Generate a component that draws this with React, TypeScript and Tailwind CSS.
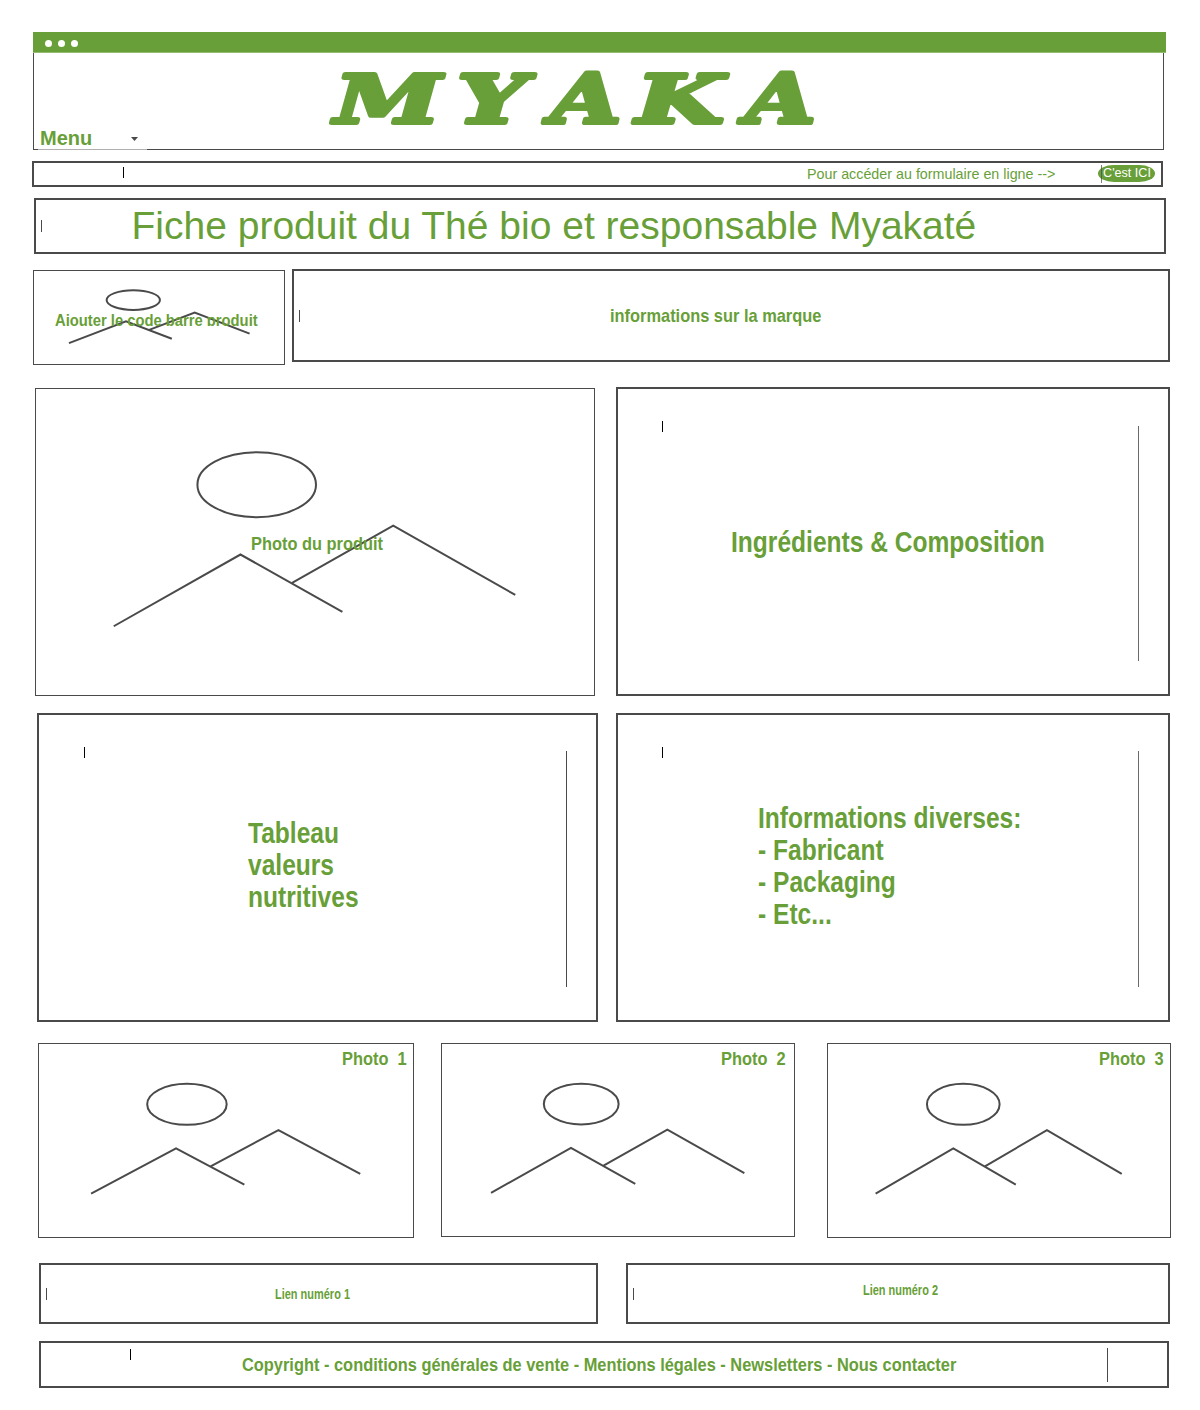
import type { ReactNode } from 'react';

const cx = (...parts: (string | undefined)[]) => parts.filter(Boolean).join(' ');

function Caret({ className }: { className: string }) {
  return <span className={cx('block w-px shrink-0', className)} />;
}

function Label({ className, children }: { className: string; children: ReactNode }) {
  return (
    <span className={cx('block shrink-0 origin-left scale-x-[.863] whitespace-pre text-[19px] font-bold leading-[20px]', className)}>
      {children}
    </span>
  );
}

function Heading({ className, children }: { className: string; children: ReactNode }) {
  return (
    <h2 className={cx('shrink-0 origin-left scale-x-[.847] whitespace-pre text-[29px] font-bold leading-[32px]', className)}>
      {children}
    </h2>
  );
}

function Frame({ className, children }: { className: string; children: ReactNode }) {
  return <section className={cx('flex shrink-0 items-start border-2 border-[#4a4a4a]', className)}>{children}</section>;
}

/* Image placeholder: a sun above two mountains, stretched to its box. */
function Picture({ className, children }: { className: string; children: ReactNode }) {
  return (
    <figure className={cx('grid shrink-0 grid-rows-[100%] border border-[#4a4a4a]', className)}>
      <svg
        className="col-start-1 row-start-1 h-full min-h-0 w-full overflow-visible"
        viewBox="0 0 560 308"
        preserveAspectRatio="none"
        fill="none"
        stroke="#4a4a4a"
        strokeWidth="2"
      >
        <ellipse cx="221.5" cy="96.3" rx="59.5" ry="32.7" vectorEffect="non-scaling-stroke" />
        <path d="M78 238.8 205.2 166.6 307.5 224.4" vectorEffect="non-scaling-stroke" />
        <path d="M257 195.2 358.5 137.5 481 207.3" vectorEffect="non-scaling-stroke" />
      </svg>
      {children}
    </figure>
  );
}

const LETTERS = [
  { char: 'M', transform: 'translate(5.5 55) scale(1.44 1)' },
  { char: 'Y', transform: 'translate(128 55) scale(1.46 1)' },
  { char: 'A', transform: 'translate(221.5 55) scale(1.36 1.04)' },
  { char: 'K', transform: 'translate(307 55) scale(1.51 1)' },
  { char: 'A', transform: 'translate(416.5 55) scale(1.35 1.04)' },
];

function Logo() {
  return (
    <svg className="ml-[295px] mt-[15px] h-[58px] w-[500px] shrink-0 overflow-visible" viewBox="0 0 500 58" aria-label="MYAKA">
      <g
        fill="#689f38"
        stroke="#689f38"
        strokeWidth="4"
        strokeLinejoin="round"
        fontFamily="'DejaVu Serif', serif"
        fontWeight="700"
        fontStyle="italic"
        fontSize="67"
      >
        {LETTERS.map((l, i) => (
          <text key={i} transform={l.transform}>
            {l.char}
          </text>
        ))}
      </g>
    </svg>
  );
}

export default function App() {
  return (
    <main className="flex h-[1410px] w-[1200px] flex-col bg-white pt-8 font-['Liberation_Sans',Arial,sans-serif] text-[#689f38]">
      <header className="ml-[33px] h-[118px] w-[1133px]">
        <div className="flex h-[21px] items-center gap-[6px] border-b border-[#93bb71] bg-[#689f38] pl-3 pt-[3px]">
          <i className="size-[7px] rounded-full bg-white" />
          <i className="size-[7px] rounded-full bg-white" />
          <i className="size-[7px] rounded-full bg-white" />
        </div>
        <div className="flex h-[97px] w-[1131px] flex-col border border-t-0 border-[#4a4a4a]">
          <Logo />
          <div className="ml-1 flex h-[24px] w-[109px] shrink-0 items-start border-b border-[#b0b0b0] bg-white pl-[2px]">
            <span className="w-[91px] text-[20px] font-bold leading-[24px]">Menu</span>
            <svg className="mt-[11px] h-1 w-[7px]" viewBox="0 0 7 4">
              <path d="M0 0H7L3.5 4Z" fill="#4a4a4a" />
            </svg>
          </div>
        </div>
      </header>

      <Frame className="ml-8 mt-[11px] h-[25.5px] w-[1131px]">
        <Caret className="ml-[89px] mt-1 h-[11px] bg-black" />
        <span className="ml-[683px] mt-[2px] w-[291px] whitespace-nowrap text-[14.3px] leading-[18px]">
          Pour accéder au formulaire en ligne --&gt;
        </span>
        <a className="relative mt-[2px] h-[17px] w-[57px] rounded-[16px/8.5px] bg-[#689f38] pl-px text-center text-[12.6px] leading-[17px] text-white">
          C'est ICI
          <Caret className="absolute left-[3px] top-0 h-[18px] bg-[#4a4a4a]/70" />
        </a>
      </Frame>

      <Frame className="ml-[34px] mt-[11.5px] h-[56px] w-[1132px]">
        <Caret className="ml-[5px] mt-5 h-3 bg-[#4a4a4a]" />
        <h1 className="ml-[89.5px] mt-[4px] whitespace-nowrap text-[39px] leading-[44px]">
          Fiche produit du Thé bio et responsable Myakaté
        </h1>
      </Frame>

      <div className="ml-[33px] mt-[15px] flex items-start gap-[7px]">
        <Picture className="mt-px h-[95px] w-[252px]">
          <figcaption className="z-10 col-start-1 row-start-1 ml-[21px] mt-[40px] h-[15px] w-[230px] origin-left scale-x-[.907] overflow-hidden whitespace-nowrap text-[16.3px] font-bold leading-[19px]">
            Ajouter le code barre produit
          </figcaption>
        </Picture>
        <Frame className="h-[93px] w-[878px]">
          <Caret className="ml-[5px] mt-[39px] h-3 bg-[#4a4a4a]" />
          <Label className="ml-[310px] mt-[35px]">informations sur la marque</Label>
        </Frame>
      </div>

      <div className="ml-[35px] mt-[22px] flex items-start gap-[21px]">
        <Picture className="mt-px h-[308px] w-[560px]">
          <figcaption className="z-10 col-start-1 row-start-1">
            <Label className="ml-[215px] mt-[145px] w-[160px]">Photo du produit</Label>
          </figcaption>
        </Picture>
        <Frame className="h-[309px] w-[554px]">
          <Caret className="ml-11 mt-8 h-[11px] bg-black" />
          <Heading className="ml-[68px] mt-[137px] w-[405px]">Ingrédients &amp; Composition</Heading>
          <Caret className="ml-0.5 mt-[37px] h-[235px] bg-[#6a6a6a]" />
        </Frame>
      </div>

      <div className="ml-[37px] mt-[17px] flex items-start gap-[18px]">
        <Frame className="h-[309px] w-[561px]">
          <Caret className="ml-[45px] mt-8 h-[11px] bg-black" />
          <Heading className="ml-[163px] mt-[102px] w-[316px]">{'Tableau\nvaleurs\nnutritives'}</Heading>
          <Caret className="ml-[2px] mt-9 h-[236px] bg-[#4a4a4a]" />
        </Frame>
        <Frame className="h-[309px] w-[554px]">
          <Caret className="ml-11 mt-8 h-[11px] bg-black" />
          <Heading className="ml-[95px] mt-[87px] w-[378px]">{'Informations diverses:\n- Fabricant\n- Packaging\n- Etc...'}</Heading>
          <Caret className="ml-0.5 mt-9 h-[236px] bg-[#6a6a6a]" />
        </Frame>
      </div>

      <div className="ml-[38px] mt-[21px] flex items-start">
        <Picture className="h-[195px] w-[376px]">
          <figcaption className="z-10 col-start-1 row-start-1">
            <Label className="ml-[303px] mt-[5px] w-[70px]">{'Photo  1'}</Label>
          </figcaption>
        </Picture>
        <Picture className="ml-[27px] h-[194px] w-[354px]">
          <figcaption className="z-10 col-start-1 row-start-1">
            <Label className="ml-[279px] mt-[5px] w-[70px]">{'Photo  2'}</Label>
          </figcaption>
        </Picture>
        <Picture className="ml-[32px] h-[195px] w-[344px]">
          <figcaption className="z-10 col-start-1 row-start-1">
            <Label className="ml-[271px] mt-[5px] w-[70px]">{'Photo  3'}</Label>
          </figcaption>
        </Picture>
      </div>

      <div className="ml-[39px] mt-[25px] flex items-start gap-7">
        <Frame className="h-[61px] w-[559px]">
          <Caret className="ml-[5px] mt-[23px] h-3 bg-[#4a4a4a]" />
          <a className="ml-[228px] mt-[21px] origin-left scale-x-[.79] whitespace-nowrap text-[13.9px] font-bold leading-[17px]">
            Lien numéro 1
          </a>
        </Frame>
        <Frame className="h-[61px] w-[544px]">
          <Caret className="ml-[5px] mt-[23px] h-3 bg-[#4a4a4a]" />
          <a className="ml-[229px] mt-[17px] origin-left scale-x-[.79] whitespace-nowrap text-[13.9px] font-bold leading-[17px]">
            Lien numéro 2
          </a>
        </Frame>
      </div>

      <Frame className="ml-[39px] mt-[17px] h-[47px] w-[1130px]">
        <Caret className="ml-[89px] mt-[6px] h-[11px] bg-black" />
        <Label className="ml-[111px] mt-[12px] w-[863px]">
          Copyright - conditions générales de vente - Mentions légales - Newsletters - Nous contacter
        </Label>
        <Caret className="ml-[2px] mt-[5px] h-[34px] bg-[#4a4a4a]" />
      </Frame>
    </main>
  );
}
